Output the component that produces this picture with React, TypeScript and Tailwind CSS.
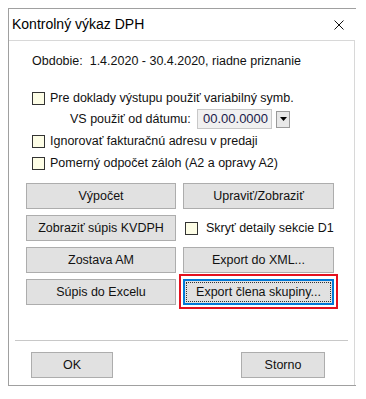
import React from "react";

const font = { fontFamily: '"Liberation Sans", Arial, sans-serif' };

function Check({ label, className = "" }: { label: string; className?: string }) {
  return (
    <div className={`flex items-center h-[20px] ${className}`}>
      <div className="w-[13px] h-[13px] border border-[#333333] bg-[#fdfde6] shrink-0" />
      <span className="ml-[5px] text-[12.5px] text-[#111] whitespace-nowrap">{label}</span>
    </div>
  );
}

function Btn({ label, className = "" }: { label: string; className?: string }) {
  return (
    <div
      className={`h-[26px] flex items-center justify-center bg-[#e1e1e1] border border-[#adadad] text-[12.5px] text-[#111] whitespace-nowrap ${className}`}
    >
      {label}
    </div>
  );
}

export default function App() {
  return (
    <div className="w-[366px] h-[399px] bg-white relative" style={font}>
      <div className="absolute left-[8px] top-[8px] w-[348px] h-[378px] border-l border-t border-b border-[#a0a0a0] bg-white flex flex-col">
        <div className="h-[31px] flex items-center justify-between pl-[3px] pr-[12px] shrink-0">
          <span className="text-[14px] text-black">Kontrolný výkaz DPH</span>
          <svg width="10" height="10" viewBox="0 0 10 10">
            <path d="M0.5 0.5 L9.5 9.5 M9.5 0.5 L0.5 9.5" stroke="#111" strokeWidth="1" />
          </svg>
        </div>
        <div className="flex-1 border-t border-r border-[#d8d8d8] flex flex-col mr-[1px]">
          <div className="mt-[12px] pl-[23px] h-[16px] leading-[16px] text-[12.5px] text-[#111] whitespace-nowrap">
            Obdobie:&nbsp; 1.4.2020 - 30.4.2020, riadne priznanie
          </div>
          <Check label="Pre doklady výstupu použiť variabilný symb." className="mt-[19px] pl-[23px]" />
          <div className="mt-[1px] h-[20px] flex items-center pl-[61px]">
            <span className="text-[12.5px] text-[#111] w-[127px] whitespace-nowrap">VS použiť od dátumu:</span>
            <div className="w-[75px] h-[20px] bg-[#f0f0f0] border border-[#c8c8c8] flex items-center pl-[5px] text-[13px] text-[#1a1a4a]">
              00.00.0000
            </div>
            <div className="ml-[4px] w-[14px] h-[17px] bg-[#e8e8e8] border border-[#9a9a9a] flex items-center justify-center">
              <svg width="7" height="4" viewBox="0 0 7 4">
                <path d="M0 0 H7 L3.5 4 Z" fill="#000" />
              </svg>
            </div>
          </div>
          <Check label="Ignorovať fakturačnú adresu v predaji" className="mt-[2px] pl-[23px]" />
          <Check label="Pomerný odpočet záloh (A2 a opravy A2)" className="mt-[2px] pl-[23px]" />
          <div className="mt-[10px] ml-[17px] grid grid-cols-[150px_151px] gap-x-[7px] gap-y-[6px]">
            <Btn label="Výpočet" />
            <Btn label="Upraviť/Zobraziť" />
            <Btn label="Zobraziť súpis KVDPH" />
            <div className="h-[26px] flex items-center pl-[2px]">
              <div className="w-[13px] h-[13px] border border-[#333333] bg-[#fdfde6] shrink-0" />
              <span className="ml-[8px] text-[12.5px] text-[#111] whitespace-nowrap">Skryť detaily sekcie D1</span>
            </div>
            <Btn label="Zostava AM" />
            <Btn label="Export do XML..." />
            <Btn label="Súpis do Excelu" />
            <div className="relative">
              <div className="absolute left-[-4px] top-[-5px] right-[-4px] bottom-[-4px] border-2 border-[#e4101e]" />
              <div className="h-[26px] flex items-center justify-center bg-[#e1e1e1] border-2 border-[#0078d7] text-[12.5px] text-[#111] whitespace-nowrap relative">
                <div className="absolute inset-[1px] border border-dotted border-[#333]" />
                <span className="relative">Export člena skupiny...</span>
              </div>
            </div>
          </div>
          <div className="mt-[35px] mx-[6px] h-px bg-[#c8c8c8]" />
          <div className="mt-[11px] flex">
            <Btn label="OK" className="ml-[22px] w-[82px] h-[25px]" />
            <Btn label="Storno" className="ml-[128px] w-[84px] h-[25px]" />
          </div>
        </div>
      </div>
    </div>
  );
}
